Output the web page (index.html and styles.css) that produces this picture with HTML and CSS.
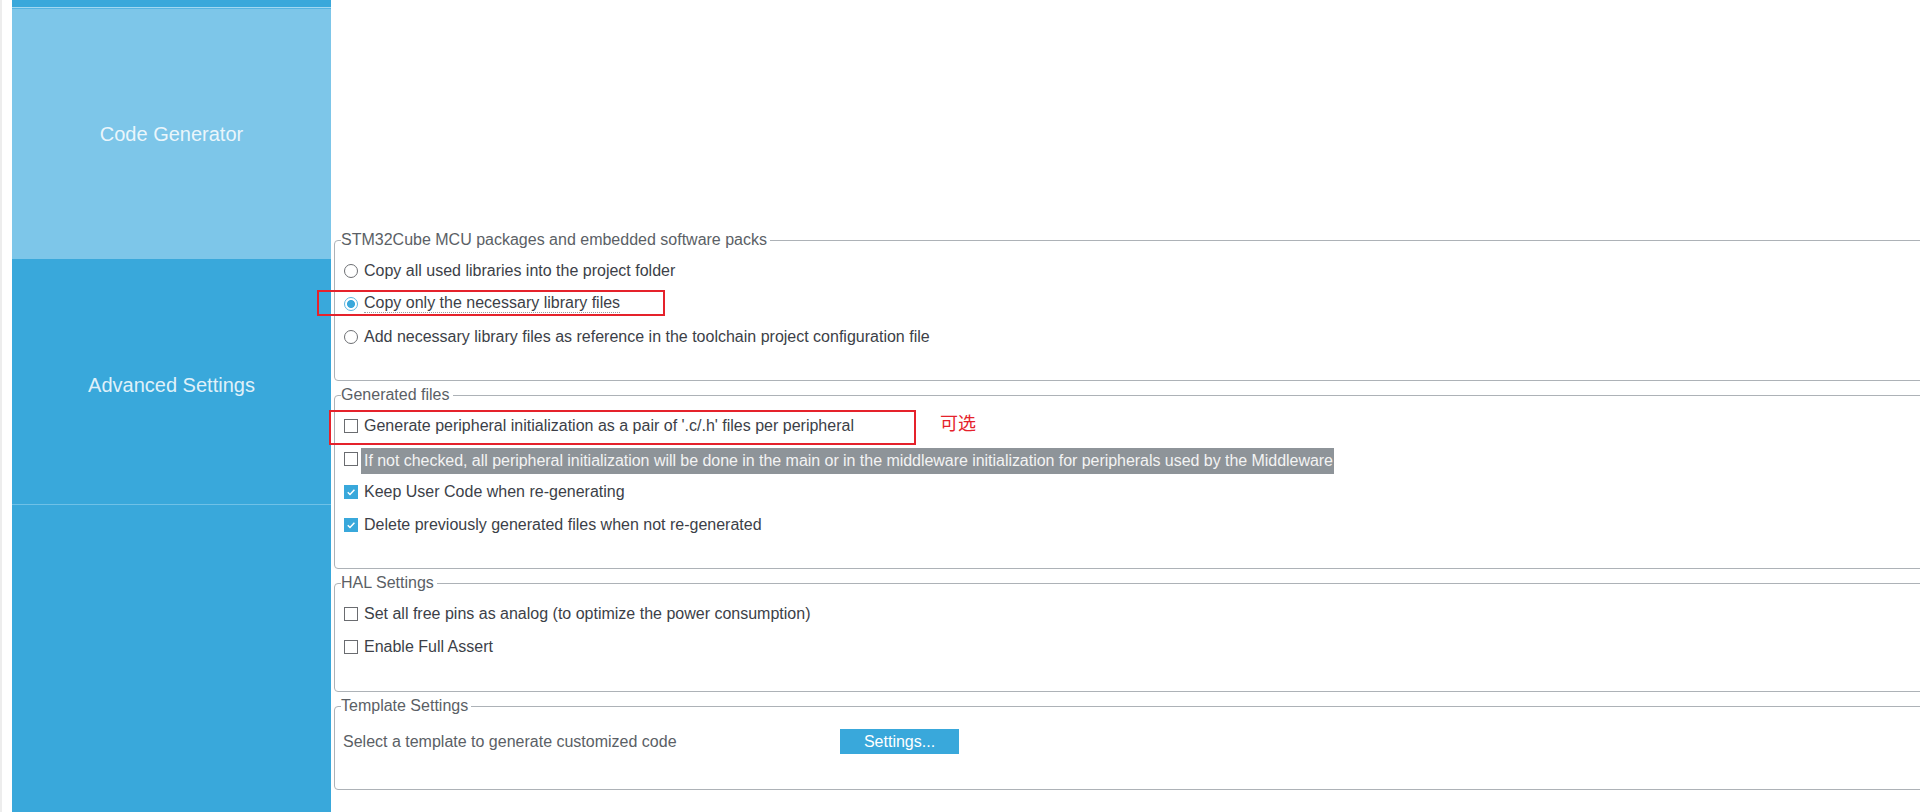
FILE: index.html
```html
<!DOCTYPE html>
<html>
<head>
  <meta charset="UTF-8">
  <title>Project Manager</title>
  <link rel="stylesheet" href="styles.css">
</head>
<body>
  <div class="app">
    <div class="gutter"></div>

    <nav class="sidebar">
      <div class="nav-stub"></div>
      <div class="nav-item active">Code Generator</div>
      <div class="nav-item">Advanced Settings</div>
      <div class="nav-item rest"></div>
    </nav>

    <main class="content">
      <fieldset class="group packs">
        <legend>STM32Cube MCU packages and embedded software packs</legend>
        <div class="group-body">
          <label class="opt"><span class="radio"></span>Copy all used libraries into the project folder</label>
          <label class="opt">
            <span class="radio on"></span><span class="focused">Copy only the necessary library files</span>
            <span class="mark mark-copy"></span>
          </label>
          <label class="opt"><span class="radio"></span>Add necessary library files as reference in the toolchain project configuration file</label>
        </div>
      </fieldset>

      <fieldset class="group files">
        <legend>Generated files</legend>
        <div class="group-body">
          <label class="opt">
            <span class="check"></span>Generate peripheral initialization as a pair of '.c/.h' files per peripheral
            <span class="mark mark-gen"></span>
            <span class="note">可选</span>
          </label>
          <label class="opt">
            <span class="check"></span>
            <span class="tip">If not checked, all peripheral initialization will be done in the main or in the middleware initialization for peripherals used by the Middleware</span>
          </label>
          <label class="opt">
            <span class="check on"><svg viewBox="0 0 13 13"><path d="M3 6.8l2.4 2.4L10.2 4"/></svg></span>Keep User Code when re-generating
          </label>
          <label class="opt">
            <span class="check on"><svg viewBox="0 0 13 13"><path d="M3 6.8l2.4 2.4L10.2 4"/></svg></span>Delete previously generated files when not re-generated
          </label>
        </div>
      </fieldset>

      <fieldset class="group hal">
        <legend>HAL Settings</legend>
        <div class="group-body">
          <label class="opt"><span class="check"></span>Set all free pins as analog (to optimize the power consumption)</label>
          <label class="opt"><span class="check"></span>Enable Full Assert</label>
        </div>
      </fieldset>

      <fieldset class="group template">
        <legend>Template Settings</legend>
        <div class="group-body">
          <div class="tpl-row">
            <span class="tpl-label">Select a template to generate customized code</span>
            <button class="btn">Settings...</button>
          </div>
        </div>
      </fieldset>
    </main>
  </div>
</body>
</html>
```

FILE: styles.css
```css
:root {
  --blue: #39a8db;
  --blue-light: #7dc6e9;
  --text: #3c3f48;
  --text-muted: #5b5f66;
  --line: #adb2b7;
  --red: #e5222b;
}

* {
  margin: 0;
  padding: 0;
  box-sizing: border-box;
}

body {
  margin: 0;
  height: 812px;
  overflow: hidden;
  background: #fff;
  font-family: "Liberation Sans", Arial, sans-serif;
  font-size: 16px;
  color: var(--text);
}

.app {
  display: flex;
  height: 100%;
}

.gutter {
  width: 12px;
  flex: none;
  border-left: 2px solid #ededed;
}

/* Left navigation */
.sidebar {
  width: 319px;
  flex: none;
  display: flex;
  flex-direction: column;
  background: var(--blue);
}

.nav-stub {
  height: 8px;
  border-bottom: 1px solid #a3d8f1;
}

.nav-item {
  display: flex;
  align-items: center;
  justify-content: center;
  height: 246px;
  padding-top: 7px;
  font-size: 20px;
  color: rgba(255, 255, 255, 0.86);
  border-bottom: 1px solid #6fc1e7;
}

.nav-item.active {
  height: 251px;
  padding-top: 0;
  background: var(--blue-light);
  border-top: 1px solid #55b4e1;
  border-bottom: none;
}

.nav-item.rest {
  flex: 1;
  border-bottom: none;
}

/* Settings panel */
.content {
  flex: 1;
  min-width: 0;
  padding: 231px 0 0 3px;
}

.group {
  width: calc(100% + 20px);
  min-width: 0;
  margin: 0 0 5px;
  padding: 0 0 0 9px;
  border: 1px solid var(--line);
  border-radius: 4px;
}

.group legend {
  margin-left: -3px;
  padding: 0 3px 0 0;
  line-height: 18px;
  color: var(--text-muted);
}

.group-body {
  padding-top: 5px;
}

.packs .group-body { height: 131px; }
.files .group-body { height: 164px; }
.hal .group-body { height: 99px; }
.template .group-body { height: 74px; padding-top: 10px; }

.opt {
  position: relative;
  display: flex;
  align-items: center;
  gap: 6px;
  height: 33px;
  white-space: nowrap;
}

.radio {
  width: 14px;
  height: 14px;
  flex: none;
  border: 1px solid #6d6f73;
  border-radius: 50%;
  background: #fff;
}

.radio.on {
  border-color: #5cb6e0;
  background: radial-gradient(circle, var(--blue) 0 3.6px, #fff 4.4px);
}

.check {
  width: 14px;
  height: 14px;
  flex: none;
  border: 1px solid #6a6c70;
  background: #fff;
}

.check.on {
  border-color: var(--blue);
  background: var(--blue);
}

.check svg {
  display: block;
  width: 12px;
  height: 12px;
}

.check path {
  fill: none;
  stroke: #fff;
  stroke-width: 1.6;
}

.focused {
  line-height: 18px;
  border-bottom: 1px dotted #9a9ca0;
}

.tpl-row {
  display: flex;
  align-items: center;
  height: 33px;
}

.tpl-label {
  width: 497px;
  margin-left: -1px;
  color: var(--text-muted);
}

.btn {
  width: 119px;
  height: 25px;
  border: none;
  background: var(--blue);
  color: #fff;
  font: inherit;
}

/* Tooltip over the backup option */
.tip {
  position: absolute;
  left: 17px;
  top: 6px;
  height: 26px;
  line-height: 26px;
  padding: 0 1px 0 3px;
  letter-spacing: -0.04px;
  background: #8e9499;
  color: #f3f3f3;
}

/* Red annotations */
.mark {
  position: absolute;
  border: 2px solid var(--red);
  pointer-events: none;
}

.mark-copy {
  left: -27px;
  top: 3px;
  width: 348px;
  height: 26px;
}

.mark-gen {
  left: -15px;
  top: 1px;
  width: 587px;
  height: 35px;
}

.note {
  position: absolute;
  left: 596px;
  top: 3px;
  font-family: "Noto Sans CJK SC", sans-serif;
  font-size: 18px;
  line-height: 20px;
  color: var(--red);
}
```
